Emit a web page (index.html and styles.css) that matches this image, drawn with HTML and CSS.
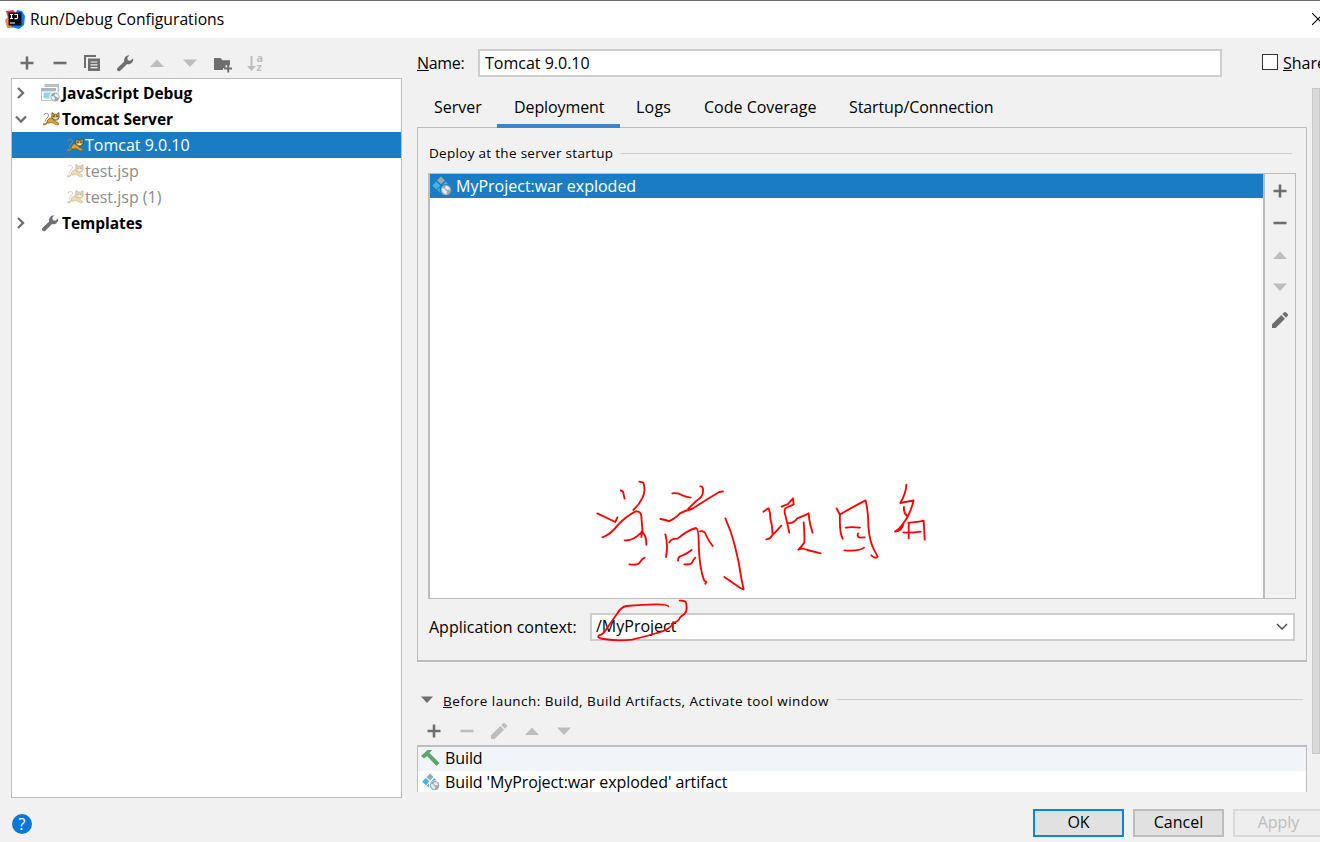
FILE: index.html
```html
<!DOCTYPE html>
<html lang="en">
<head>
    <meta charset="UTF-8">
    <title>Run/Debug Configurations</title>
    <link rel="stylesheet" href="styles.css">
</head>
<body>
    <!-- Shared icons -->
    <svg class="sprite">
        <symbol id="plus" viewBox="0 0 16 16"><path d="M6.700 1.500h2.600v5.200h5.200v2.600H9.300v5.200H6.700V9.300H1.500V6.700h5.200z"/></symbol>
        <symbol id="minus" viewBox="0 0 16 16"><path d="M1.500 6.700h13v2.600h-13z"/></symbol>
        <symbol id="up" viewBox="0 0 16 16"><path d="M8 4.500l7 7.500H1z"/></symbol>
        <symbol id="down" viewBox="0 0 16 16"><path d="M1 4.500h14L8 12z"/></symbol>
        <symbol id="pencil" viewBox="0 0 18 18"><path d="M1 13.300L10.300 4 14 7.700 4.700 17H1zM11.300 3l1.600-1.600c.7-.7 1.500-.7 2.200 0l1.500 1.500c.7.7.7 1.500 0 2.200L15 6.700z"/></symbol>
        <symbol id="wrench" viewBox="0 0 18 18"><path d="M1.200 14.200L8.300 7.600C7.500 4.500 9.500 1.300 13.500 1.200L11.300 3.800l.5 2.400 2.500.5 2.800-2.500c.7 4-2.700 6.800-6 5.800L4 17c-1.800.9-3.800-1-2.800-2.800z"/></symbol>
        <symbol id="right" viewBox="0 0 12 12"><path d="M3 1l5 5-5 5" fill="none" stroke="#6e6e6e" stroke-width="2.300"/></symbol>
        <symbol id="open" viewBox="0 0 12 12"><path d="M1 3.500l5 5 5-5" fill="none" stroke="#6e6e6e" stroke-width="2.300"/></symbol>
        <symbol id="globe" viewBox="0 0 12 12">
            <circle cx="6" cy="6" r="5" fill="#9aa7b0"/>
            <path d="M2 5l3 .5 1 2-1 2.500C3 9.500 1.600 7.500 2 5zM6.500 2l3 1.500.8 2.500-1.500 1-2-1.500-1.300-.8z" fill="#eef0f2"/>
        </symbol>
        <symbol id="artifact" viewBox="0 0 20 20">
            <path d="M9 .5l3.900 3.900L9 8.300 5.100 4.400z" fill="#9aa7b0"/>
            <path d="M4.300 5.500l4 4-4 4-4-4zM13.500 5.500l2.600 2.600c-3 0-5 .8-6.400 1.800zM8.300 11c-1 2-1 4 .2 6.200L5.200 14z" fill="#40b6e0"/>
            <circle cx="14" cy="14" r="5.200" fill="#9aa7b0"/>
            <path d="M10 12l3 .8.5 1.700 1.500 1-.5 2.700c-3 0-5-3-4.500-6.200zM14 10c2.500 0 4 1.700 4 4l-1.500-.5-1 .8-1.500-1.300-1.300-1.500z" class="land"/>
        </symbol>
        <symbol id="cat" viewBox="0 0 18 14">
            <path d="M2 3C2.500.8 6 .8 6.500 3S3.500 6.500 3 9.500" fill="none" stroke="#8a8a80" stroke-width="1"/>
            <path d="M4.500 12.500c-1.500 1-3 .8-3.800.3l.4-1.300 2.600-.4L6 8l4-2z" fill="#a5803a"/>
            <path d="M5 9l2.500-3H11l2 3 4 2.500-.8 1.500-2-.3L10 10.500l-4 .7z" fill="#d9a62e" stroke="#6b5420" stroke-width=".6"/>
            <path d="M10 .6l2.200 1.600h2.600L17 .6v5.200L15.500 8h-3.800L9.800 5.800z" fill="#dfb04a" stroke="#4b3f20" stroke-width=".8"/>
            <path d="M11.300 3.500h1.400v1.300h-1.400zM14.300 3.500h1.400v1.300h-1.400z" fill="#222"/>
            <path d="M12.300 6.400h2.500" stroke="#fff0c8" stroke-width="1.300"/>
        </symbol>
    </svg>

    <div class="dialog">
        <div class="titlebar">
            <svg class="logo" viewBox="0 0 20 20">
                <path d="M1 2l7-1 5 5-3 12-7 1L1 13l2-4z" fill="#f0325c"/>
                <path d="M0 11l4-4 3 11-5 1z" fill="#fb8a3c"/>
                <path d="M12 1l5 1 3 5-1 9-5 4-8-2z" fill="#087cfa"/>
                <path d="M3.500 3.500h13v13h-13z" fill="#0b0b12"/>
                <path d="M5 5.500h3M6.500 5.500v4M5 9.500h3M9.500 5.500h3v3.200q0 1-1.200 1H9.500M5 14h5" fill="none" stroke="#fff" stroke-width="1.200"/>
            </svg>
            <span class="title">Run/Debug Configurations</span>
            <svg class="close" viewBox="0 0 12 12"><path d="M0 0l12 12M12 0L0 12" stroke="#000" stroke-width="1.100"/></svg>
        </div>

        <div class="main">
            <div class="sidebar">
                <div class="toolbar">
                    <svg class="icon"><use href="#plus"/></svg>
                    <svg class="icon"><use href="#minus"/></svg>
                    <svg class="icon big" viewBox="0 0 18 18"><path d="M1 1h12v2H3v11H1zM5 4.500h12V17H5z"/><path d="M7.500 8h7M7.500 10.800h7M7.500 13.600h7" stroke="#f1f1f1" stroke-width="1.200"/></svg>
                    <svg class="icon big"><use href="#wrench"/></svg>
                    <svg class="icon off"><use href="#up"/></svg>
                    <svg class="icon off"><use href="#down"/></svg>
                    <svg class="icon big folder" viewBox="0 0 18 18"><path d="M0 3h6.500l2 2.200H16v5h-4.500v3H9V15H0z"/><path d="M13.200 9.500h2v3h3v2h-3v3h-2v-3h-3v-2h3z"/></svg>
                    <div class="sort off">
                        <svg viewBox="0 0 9 16"><path d="M3.500 1h2v10H9l-4.500 5L0 11h3.500z"/></svg>
                        <span class="az">a<br>z</span>
                    </div>
                </div>
                <div class="tree">
                    <div class="node bold">
                        <svg class="arrow"><use href="#right"/></svg>
                        <svg class="kind" viewBox="0 0 20 18">
                            <path d="M3.500 0H18v10h-1.500V3h-13z" fill="#b8c0c6"/>
                            <path d="M0 4h15v3H0z" fill="#a9b4bb"/>
                            <path d="M.5 7h14v9.500H.5z" fill="#fff" stroke="#b8c0c6"/>
                            <path d="M2.500 8.500h10v6h-10z" fill="#8fd5ed"/>
                            <circle cx="14" cy="13" r="5.700" fill="#fff"/>
                            <use href="#globe" x="8.500" y="7.500" width="11" height="11"/>
                        </svg>
                        <span>JavaScript Debug</span>
                    </div>
                    <div class="node bold">
                        <svg class="arrow"><use href="#open"/></svg>
                        <svg class="kind cat"><use href="#cat"/></svg>
                        <span>Tomcat Server</span>
                    </div>
                    <div class="node child selected">
                        <svg class="kind cat"><use href="#cat"/></svg>
                        <span>Tomcat 9.0.10</span>
                    </div>
                    <div class="node child temp">
                        <svg class="kind cat"><use href="#cat"/></svg>
                        <span>test.jsp</span>
                    </div>
                    <div class="node child temp">
                        <svg class="kind cat"><use href="#cat"/></svg>
                        <span>test.jsp (1)</span>
                    </div>
                    <div class="node bold">
                        <svg class="arrow"><use href="#right"/></svg>
                        <svg class="kind tool"><use href="#wrench"/></svg>
                        <span>Templates</span>
                    </div>
                </div>
            </div>

            <div class="content">
                <div class="name-row">
                    <label class="name-label"><u>N</u>ame:</label>
                    <div class="field name-field">Tomcat 9.0.10</div>
                    <span class="checkbox"></span>
                    <label class="share"><u>S</u>hare</label>
                </div>

                <div class="scroll-area">
                    <div class="pane">
                        <div class="tabs">
                            <div class="tab server">Server</div>
                            <div class="tab active">Deployment</div>
                            <div class="tab logs">Logs</div>
                            <div class="tab coverage">Code Coverage</div>
                            <div class="tab startup">Startup/Connection</div>
                        </div>
                        <div class="panel">
                            <div class="section"><span class="heading">Deploy at the server startup</span><i class="rule"></i></div>
                            <div class="deploy">
                                <div class="deploy-list">
                                    <div class="deploy-item"><svg class="artifact"><use href="#artifact"/></svg><span>MyProject:war exploded</span></div>
                                </div>
                                <div class="deploy-tools">
                                    <svg class="icon"><use href="#plus"/></svg>
                                    <svg class="icon"><use href="#minus"/></svg>
                                    <svg class="icon off"><use href="#up"/></svg>
                                    <svg class="icon off"><use href="#down"/></svg>
                                    <svg class="icon big"><use href="#pencil"/></svg>
                                </div>
                            </div>
                            <div class="context">
                                <label>Application context:</label>
                                <div class="field combo"><span>/MyProject</span>
                                    <svg class="drop" viewBox="0 0 12 8"><path d="M1 1l5 5 5-5" fill="none" stroke="#444" stroke-width="1.300"/></svg>
                                </div>
                            </div>
                        </div>

                        <div class="launch-head">
                            <svg class="fold" viewBox="0 0 12 7"><path d="M0 .5h12L6 7z"/></svg>
                            <span class="heading"><u>B</u>efore launch: Build, Build Artifacts, Activate tool window</span><i class="rule"></i>
                        </div>
                        <div class="toolbar launch-tools">
                            <svg class="icon"><use href="#plus"/></svg>
                            <svg class="icon off"><use href="#minus"/></svg>
                            <svg class="icon big off"><use href="#pencil"/></svg>
                            <svg class="icon off"><use href="#up"/></svg>
                            <svg class="icon off"><use href="#down"/></svg>
                        </div>
                        <div class="launch-list">
                            <div class="task first">
                                <svg class="task-icon" viewBox="0 0 20 18"><path d="M0 7L6.500 1 11 1 8.500 4 18.500 14 15.500 17 6 7 3 9.500z" fill="#59a869"/></svg>
                                <span>Build</span>
                            </div>
                            <div class="task">
                                <svg class="task-icon"><use href="#artifact"/></svg>
                                <span>Build 'MyProject:war exploded' artifact</span>
                            </div>
                        </div>
                    </div>
                    <div class="scrollbar"></div>
                </div>
            </div>
        </div>

        <div class="footer">
            <span class="help">?</span>
            <button class="btn ok">OK</button>
            <button class="btn">Cancel</button>
            <button class="btn disabled">Apply</button>
        </div>

        <!-- Red pen notes -->
        <svg class="pen" viewBox="0 0 1080 600">
            <path d="M122 61l7 4 5 21M178 35l12 3q8 24-2 44-10 22-28 38M52 130l54 26 6-14M67 202q25-8 45-35 25-28 55-43 16-1 17 15 2 26 4 48 12 12 11 37M134 211q24 3 50-24l3-6-3 20M148 283q25 3 30-4 8-13 16-16"/>
            <path d="M277 70q18-2 30 6 15 6 25 7M361 49q9-1 8 14 1 17-20 30l-24 23M241 147q18 3 25 7 22-10 34-24 16-9 36-13 48-31 82-51l11-2M256 193q9 31 2 68M268 217q5-12 25-11 29-25 55-32 8 3 8 38 1 80 17 120l6 4-3 5M360 184q15-4 20 16 9 17 18 28M294 272q0-13 12-15 16-6 29-17M313 283q19 2 23-5 4-10 10-15M436 145q18 39 28 80 14 53 20 100l7 33-10-4-48-33"/>
            <path d="M550 125l15-10q6 8 6 31 7 23 6 43l5 2 22-24M559 208q13-1 20-16M605 110l19-8 15-17 2 18-23 11q-8 4-1 25l11 49M623 159q17 3 29-14 23-8 34-15 1 17 5 34l7 24M671 157q3 30 2 61-11 15-18 21 12-7 27 1l40 10"/>
            <path d="M770 115l10 20q-2 55 8 71M779 134q46-27 78-43 9 43 8 78 4 47 18 72l10 18q-5 10-19-3M797 173q17-3 43 0M834 190q-4 13 8 13l12-1M793 241q47 3 59-8"/>
            <path d="M979 44q-1 26-18 55l40-8q-11 45-32 70-11 17-24 24 22-1 25-24M972 111q-2 17 9 27M986 162v43M985 158q29-1 46-6 2 25 3 57M970 187q22 2 52-2"/>
            <path d="M299 392q19-2 20 10 3 22-5 29l-13 10q-6 15-20 17-13 23-50 31-35 11-75 20-40 5-85-2-22-3-14-11 13-3 20-16l36-51q10-18 27-21 50-5 88-5 35 0 37 6"/>
        </svg>
    </div>
</body>
</html>
```

FILE: styles.css
```css
* {
    box-sizing: border-box;
}

body {
    margin: 0;
    background: #f1f1f1;
    font-family: "Open Sans", "Noto Sans", sans-serif;
    font-size: 16px;
    color: #000;
}

.sprite {
    display: none;
}

.dialog {
    position: relative;
    width: 1320px;
    height: 842px;
    overflow: hidden;
    display: flex;
    flex-direction: column;
    white-space: nowrap;
}

/* Title bar */
.titlebar {
    display: flex;
    align-items: center;
    height: 38px;
    padding-left: 5px;
    padding-bottom: 1px;
    border-top: 1px solid #6b6b6b;
    background: #fff;
}

.title {
    font-size: 15.700px;
}

.logo {
    width: 20px;
    height: 20px;
    margin-right: 5px;
}

.close {
    flex: none;
    width: 12px;
    height: 12px;
    margin-left: auto;
    margin-right: -4px;
}

/* Main area */
.main {
    display: flex;
    height: 760px;
    padding-left: 11px;
}

.sidebar {
    width: 391px;
    margin-right: 15px;
    padding-top: 12px;
}

.toolbar {
    display: flex;
    align-items: center;
    height: 28px;
    gap: 16.500px;
    padding-left: 8px;
    padding-bottom: 2px;
}

.icon {
    flex: none;
    width: 16px;
    height: 16px;
    fill: #6e6e6e;
}

.icon.big {
    width: 18px;
    height: 18px;
    margin: 0 -1px;
}

.icon.folder {
    margin: 2px -2px 0 0;
}

.off,
.icon.off {
    fill: #bdbdbd;
    color: #bdbdbd;
}

.sort {
    display: flex;
    align-items: center;
    gap: 1px;
}

.sort svg {
    width: 9px;
    height: 16px;
}

.az {
    font-size: 11px;
    font-weight: bold;
    line-height: 9px;
    padding-bottom: 3px;
}

.tree {
    height: 720px;
    padding-top: 1px;
    border: 1px solid #bdbdbd;
    background: #fff;
}

.node {
    display: flex;
    align-items: center;
    height: 26.100px;
    padding-left: 3px;
}

.node.bold {
    padding-bottom: 1px;
    font-size: 15.500px;
    font-weight: bold;
    letter-spacing: -0.050px;
}

.arrow {
    width: 12px;
    height: 12px;
    margin-right: 14px;
}

.kind {
    width: 20px;
    height: 18px;
    margin-right: 1px;
}

.kind.cat {
    width: 18px;
    height: 14px;
    margin-left: 1px;
    margin-right: 2px;
}

.kind.tool {
    margin-left: -1px;
    margin-right: 2px;
    fill: #6e6e6e;
}

.node.child {
    padding-left: 53px;
}

.child .kind.cat {
    margin-right: 1px;
}

.node.selected {
    background: #1a7dc4;
    color: #fff;
}

.node.temp {
    color: #8c8c8c;
}

.temp .cat {
    opacity: 0.4;
}

/* Right side */
.content {
    width: 903px;
    padding-top: 11px;
}

.name-row {
    display: flex;
    align-items: center;
    height: 28px;
}

.name-row label {
    padding-bottom: 1px;
}

.name-label {
    width: 61px;
    letter-spacing: -0.300px;
}

.field {
    display: flex;
    align-items: center;
    height: 28px;
    border: 2px solid #cecece;
    background: #fff;
}

.name-field {
    width: 744px;
    margin-right: 1px;
    padding-left: 5px;
    padding-bottom: 1px;
}

.checkbox {
    width: 16px;
    height: 16px;
    margin: 0 5px 2px 39px;
    border: 1px solid #333;
    background: #fff;
}

.share {
    width: 37px;
    overflow: hidden;
}

.scroll-area {
    display: flex;
    height: 715px;
    padding-top: 11px;
    overflow: hidden;
}

.pane {
    width: 890px;
    margin-right: 5px;
}

.scrollbar {
    width: 8px;
    height: 666px;
    border: 1px solid #c9c9c9;
    background: #d9d9d9;
}

.tabs {
    display: flex;
    height: 39px;
}

.tab {
    height: 40px;
    line-height: 38px;
}

.tab.server {
    width: 80px;
    padding-left: 17px;
}

.tab.active {
    position: relative;
    width: 123px;
    padding-left: 17px;
    border-bottom: 4px solid #4083c9;
    letter-spacing: -0.100px;
}

.tab.logs {
    width: 67px;
    padding-left: 16px;
    letter-spacing: 0.200px;
}

.tab.coverage {
    width: 145px;
    padding-left: 17px;
}

.tab.startup {
    padding-left: 17px;
    letter-spacing: -0.100px;
}

.panel {
    height: 535px;
    padding: 12px 10px 0;
    border: 1px solid #bdbdbd;
    border-bottom-width: 2px;
}

.section {
    display: flex;
    align-items: center;
    height: 26px;
    padding: 0 4px 0 1px;
}

.heading {
    font-size: 13.500px;
    letter-spacing: 0.300px;
}

.launch-head .heading {
    letter-spacing: 0.460px;
}

.rule {
    flex: 1;
    height: 1px;
    margin-left: 8px;
    background: #cecece;
}

.deploy {
    display: flex;
    width: 868px;
    height: 426px;
    margin-top: 7px;
    border: 1px solid #bdbdbd;
    border-left-width: 2px;
}

.deploy-list {
    width: 835px;
    border-right: 2px solid #bdbdbd;
    background: #fff;
}

.deploy-item {
    display: flex;
    align-items: center;
    height: 24px;
    padding-left: 2px;
    background: #1a7dc4;
    color: #fff;
}

.artifact {
    width: 20px;
    height: 20px;
    margin-right: 4px;
}

.land {
    fill: #e6ebef;
}

.deploy-item .land {
    fill: #1a7dc4;
}

.deploy-tools {
    display: flex;
    flex-direction: column;
    align-items: center;
    flex: 1;
    gap: 16px;
    padding-top: 9px;
}

.context {
    display: flex;
    align-items: center;
    margin-top: 14px;
    padding-left: 1px;
}

.context label {
    width: 161px;
    padding-bottom: 1px;
}

.combo {
    width: 705px;
    justify-content: space-between;
    padding: 0 5px 1px 4px;
}

.combo span {
    padding-bottom: 1px;
}

.drop {
    width: 12px;
    height: 8px;
}

/* Before launch */
.launch-head {
    display: flex;
    align-items: center;
    height: 24px;
    margin-top: 27px;
    padding: 0 4px;
}

.launch-head .fold,
.launch-head .rule {
    margin-bottom: 3px;
}

.fold {
    width: 12px;
    height: 7px;
    margin-right: 10px;
    fill: #6e6e6e;
}

.launch-tools {
    height: 32px;
    padding-top: 4px;
    padding-bottom: 0;
    padding-left: 9px;
}

.launch-list {
    height: 60px;
    border: 1px solid #bdbdbd;
    border-top-width: 2px;
    background: #fff;
}

.task {
    display: flex;
    align-items: center;
    height: 24px;
    padding-left: 3px;
    padding-bottom: 2px;
    letter-spacing: -0.100px;
}

.task.first {
    background: #f1f5fa;
}

.task-icon {
    width: 20px;
    height: 18px;
    margin-right: 4px;
}

/* Footer */
.footer {
    display: flex;
    align-items: flex-start;
    height: 44px;
    padding: 11px 0 0 12px;
    gap: 9px;
}

.help {
    width: 20px;
    height: 20px;
    margin: 5px auto 0 0;
    border-radius: 50%;
    background: #0a78d7;
    color: #fff;
    line-height: 20px;
    text-align: center;
}

.btn {
    flex: none;
    width: 91px;
    height: 28px;
    padding: 0 0 2px;
    border: 2px solid #bdbdbd;
    background: #e1e1e1;
    font: inherit;
    line-height: 22px;
}

.btn.ok {
    border: 2px solid #0a84e0;
}

.btn.disabled {
    margin-right: -4px;
    border-color: #d9d9d9;
    background: #eee;
    color: #bdbdbd;
}

/* Pen notes lie over the dialog */
.pen {
    position: absolute;
    left: 580px;
    top: 470px;
    width: 360px;
    height: 200px;
    fill: none;
    stroke: #f00;
    stroke-width: 5.500;
    stroke-linecap: round;
    stroke-linejoin: round;
}
```
